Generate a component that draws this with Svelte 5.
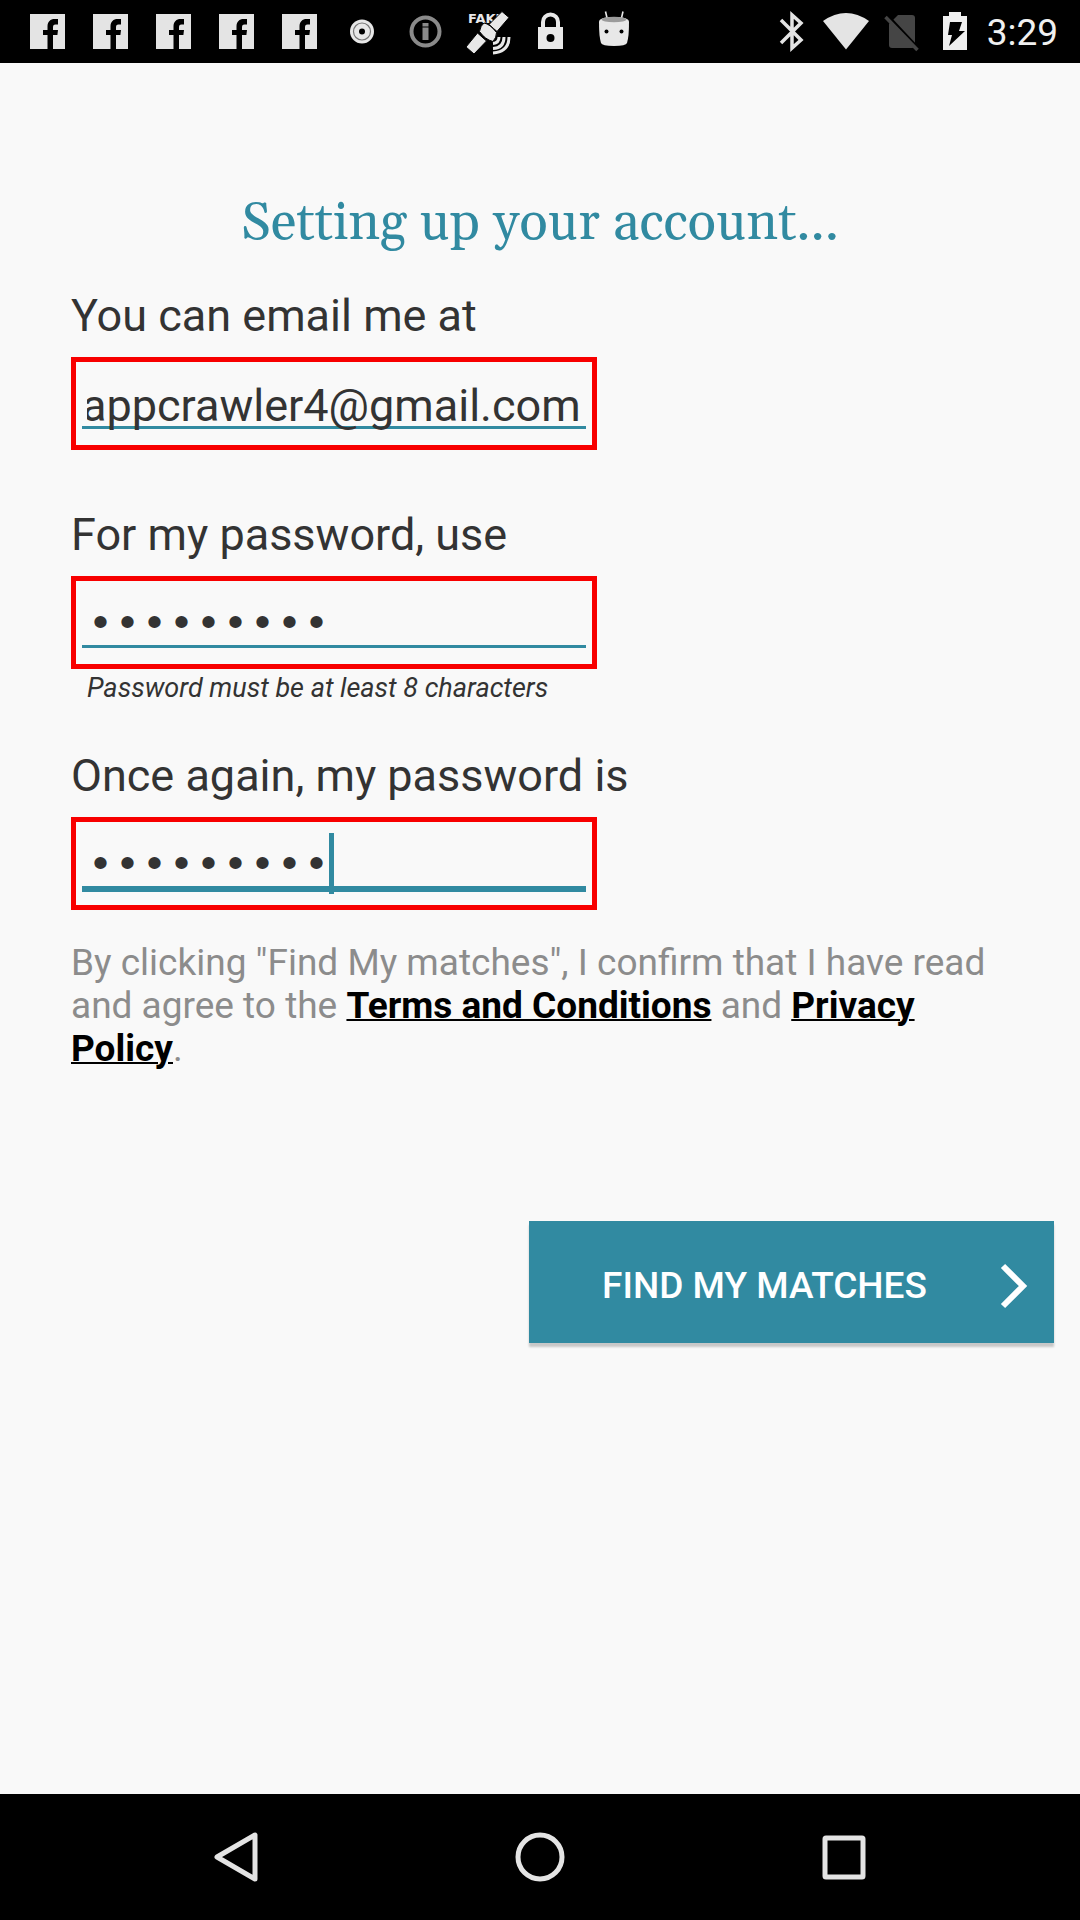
<script>
  let email = $state('appcrawler4@gmail.com');
  let password = $state('password1');
  let confirmation = $state('password1');
  let emailInput;

  // Long addresses show their end, as after typing.
  $effect(() => {
    emailInput.scrollLeft = emailInput.scrollWidth;
  });
</script>

<div class="screen">
  <header class="status">
    <div class="notifications">
      {#each [1, 2, 3, 4, 5] as n (n)}
        <svg viewBox="0 0 63 63" aria-hidden="true">
          <rect x="14" y="14" width="35" height="35" fill="#e4e4e4" />
          <path d="M31.500 49V35H27v-5h4.500v-3.500c0-5 3-7.500 7-7.500h3.500v5.500h-2.500c-2 0-2.500 1-2.500 3V30h5l-.6 5H37v14z" fill="#000" />
        </svg>
      {/each}
      <svg viewBox="0 0 63 63" aria-hidden="true">
        <circle cx="31" cy="31.500" r="12" fill="#e8e8e8" />
        <circle cx="31" cy="31.500" r="8.500" fill="none" stroke="#777" stroke-width="1.200" />
        <circle cx="31" cy="31.500" r="3" fill="#000" />
      </svg>
      <svg viewBox="0 0 63 63" aria-hidden="true">
        <circle cx="31.500" cy="31.500" r="14" fill="none" stroke="#8a8a8a" stroke-width="4" />
        <path d="M31.500 23v3.500M31.500 27.500V40" stroke="#8a8a8a" stroke-width="6" />
      </svg>
      <svg viewBox="0 0 63 63" aria-hidden="true">
        <text class="tag" x="11" y="23">FAKE</text>
        <g fill="#e8e8e8" stroke="#000" stroke-width="1">
          <path d="M45 11.500l7 6-12 14-8-7z" />
          <path d="M20.500 33l9 8-12.500 13-8-7z" />
          <path d="M27 23q6 1 12.500 9.500 0 5-3.500 9-8-2-13.500-10 1-6 4.500-8.500z" />
        </g>
        <g fill="none" stroke="#e8e8e8" stroke-width="3">
          <path d="M42 37q0 6-6 6.500M47 37q0 11-11 11.500M52 37q0 15-16 16" />
        </g>
      </svg>
      <svg viewBox="0 0 63 63" aria-hidden="true">
        <path d="M23 28v-6a7.500 7.500 0 0 1 15 0v6" fill="none" stroke="#e8e8e8" stroke-width="4" />
        <path d="M18 27h25v22H18z" fill="#e8e8e8" />
        <circle cx="30.500" cy="38" r="4" fill="#000" />
      </svg>
      <svg viewBox="0 0 63 63" aria-hidden="true">
        <path d="M24.500 20l-2-8.500M38 20l2-8.500" stroke="#e8e8e8" stroke-width="1.600" />
        <path d="M16 22q0-5 15-5t15 5q0 15-2 21-1 3-13 3t-13-3q-2-6-2-21z" fill="#e8e8e8" />
        <ellipse cx="31" cy="19.500" rx="12.500" ry="2.800" fill="#9b9b9b" />
        <circle cx="23.500" cy="31.500" r="2" fill="#000" />
        <circle cx="38.500" cy="31.500" r="2" fill="#000" />
      </svg>
    </div>
    <div class="system">
      <svg viewBox="0 0 54 63" aria-hidden="true">
        <path d="M16 20l20 20-9 8V15l9 8-20 20" fill="none" stroke="#e4e4e4" stroke-width="3.500" />
      </svg>
      <svg viewBox="0 0 54 63" aria-hidden="true">
        <path d="M4 21q23-16 46 0L27 49.500z" fill="#e4e4e4" />
      </svg>
      <svg viewBox="-2 0 54 63" aria-hidden="true">
        <path d="M23 15h14q3 0 3 3v27q0 3-3 3H17q-3 0-3-3V24z" fill="#454545" />
        <path d="M12 15l31 33" stroke="#000" stroke-width="3" />
        <path d="M10.500 17l32 33" stroke="#454545" stroke-width="3.500" />
      </svg>
      <svg viewBox="-1 0 54 63" aria-hidden="true">
        <path d="M21 12h12v4h6v34H15V16h6z" fill="#f0f0f0" />
        <path d="M22 22h12l-3 9h6L21 46l3-11h-4z" fill="#000" />
      </svg>
      <time>3:29</time>
    </div>
  </header>

  <main>
    <h1>Setting up your account...</h1>
    <form onsubmit={(e) => e.preventDefault()}>
      <label for="email">You can email me at</label>
      <div class="field">
        <input id="email" type="email" bind:value={email} bind:this={emailInput} />
      </div>

      <label for="password">For my password, use</label>
      <div class="field">
        <input id="password" type="password" bind:value={password} aria-describedby="hint" />
      </div>
      <p class="hint" id="hint">Password must be at least 8 characters</p>

      <label for="confirmation">Once again, my password is</label>
      <div class="field active">
        <input id="confirmation" type="password" bind:value={confirmation} />
        <span class="caret" style:--typed={confirmation.length}></span>
      </div>

      <p class="terms">
        By clicking "Find My matches", I confirm that I have read and agree to the
        <a href="#terms">Terms and Conditions</a> and <a href="#privacy">Privacy Policy</a>.
      </p>

      <button class="submit" type="submit">
        <span>FIND MY MATCHES</span>
        <svg viewBox="0 0 28 46" aria-hidden="true">
          <path d="M3 3l20 20L3 43" fill="none" stroke="#fff" stroke-width="6" />
        </svg>
      </button>
    </form>
  </main>

  <nav>
    <button aria-label="Back">
      <svg viewBox="0 0 50 50"><path d="M44 3v44L6 25z" /></svg>
    </button>
    <button aria-label="Home">
      <svg viewBox="0 0 50 50"><circle cx="25" cy="25" r="22" /></svg>
    </button>
    <button aria-label="Recent apps">
      <svg viewBox="0 0 50 50"><rect x="6" y="6" width="38" height="39" rx="1" /></svg>
    </button>
  </nav>
</div>

<style>
  :global(body) {
    margin: 0;
    background: #f9f9f9;
  }

  .screen {
    display: flex;
    flex-direction: column;
    min-height: 100vh;
    font-family: Roboto, sans-serif;
    color: #333;
  }

  .status {
    display: flex;
    justify-content: space-between;
    background: #000;
    padding: 0 22px 0 16px;
  }

  .notifications,
  .system {
    display: flex;
    align-items: center;
  }

  .notifications svg {
    width: 63px;
    height: 63px;
  }

  .system svg {
    width: 54px;
    height: 63px;
  }

  .tag {
    font: bold 13px "DejaVu Sans", sans-serif;
    fill: #e8e8e8;
  }

  time {
    height: 63px;
    margin-left: 6px;
    font-size: 37px;
    line-height: 65px;
    color: #f0f0f0;
  }

  main {
    flex: 1;
    padding: 125px 26px 48px 71px;
  }

  h1 {
    margin: 0 45px 29px 0;
    font: 400 53px/72px Georgia, Gelasio, "Liberation Serif", serif;
    color: #318aa1;
    text-align: center;
  }

  form {
    display: flex;
    flex-direction: column;
    align-items: flex-start;
  }

  label {
    font-size: 45px;
    line-height: 54px;
    margin-bottom: 14px;
  }

  .field {
    position: relative;
    box-sizing: border-box;
    width: 526px;
    max-width: 100%;
    height: 93px;
    padding: 16px 6px 0;
    border: 5px solid #f80000;
    margin-bottom: 58px;
  }

  input {
    display: block;
    box-sizing: border-box;
    width: 100%;
    height: 60px;
    padding: 0 5px 6px;
    border: 0;
    outline: 0;
    background: linear-gradient(#318aa1, #318aa1) 0 48px / 100% 3px no-repeat;
    color: #333;
    font: 45px/54px Roboto, sans-serif;
  }

  input[type="password"] {
    padding-bottom: 3px;
    font-family: "Liberation Mono", monospace;
  }

  .active input {
    background-size: 100% 6px;
  }

  .caret {
    position: absolute;
    top: 11px;
    left: calc(10px + var(--typed) * 1ch);
    width: 5px;
    height: 61px;
    background: #318aa1;
    font: 45px "Liberation Mono", monospace;
  }

  .field:has(+ .hint) {
    margin-bottom: 0;
  }

  .hint {
    margin: 0 0 42px 16px;
    font-size: 27px;
    font-style: italic;
    line-height: 38px;
  }

  .active {
    margin-bottom: 31px;
  }

  .terms {
    max-width: 920px;
    margin: 0 0 151px;
    font-size: 37px;
    line-height: 43px;
    color: #8c8c8c;
  }

  .terms a {
    color: #000;
    font-weight: 700;
    text-decoration-thickness: 2px;
  }

  .submit {
    display: flex;
    align-items: center;
    align-self: flex-end;
    min-width: 525px;
    height: 122px;
    padding: 8px 26px 0 0;
    border: 0;
    background: #318aa1;
    box-shadow: 0 4px 2px #c8c8c8;
    color: #fff;
    font: 500 37px/42px Roboto, sans-serif;
  }

  .submit span {
    flex: 1;
  }

  .submit svg {
    width: 28px;
    height: 46px;
  }

  nav {
    display: flex;
    justify-content: center;
    background: #000;
  }

  nav button {
    width: 304px;
    height: 126px;
    padding: 0;
    border: 0;
    background: none;
  }

  nav svg {
    display: block;
    width: 50px;
    height: 50px;
    margin: 0 auto;
    fill: none;
    stroke: #e4e4e4;
    stroke-width: 5;
    stroke-linejoin: round;
  }
</style>
